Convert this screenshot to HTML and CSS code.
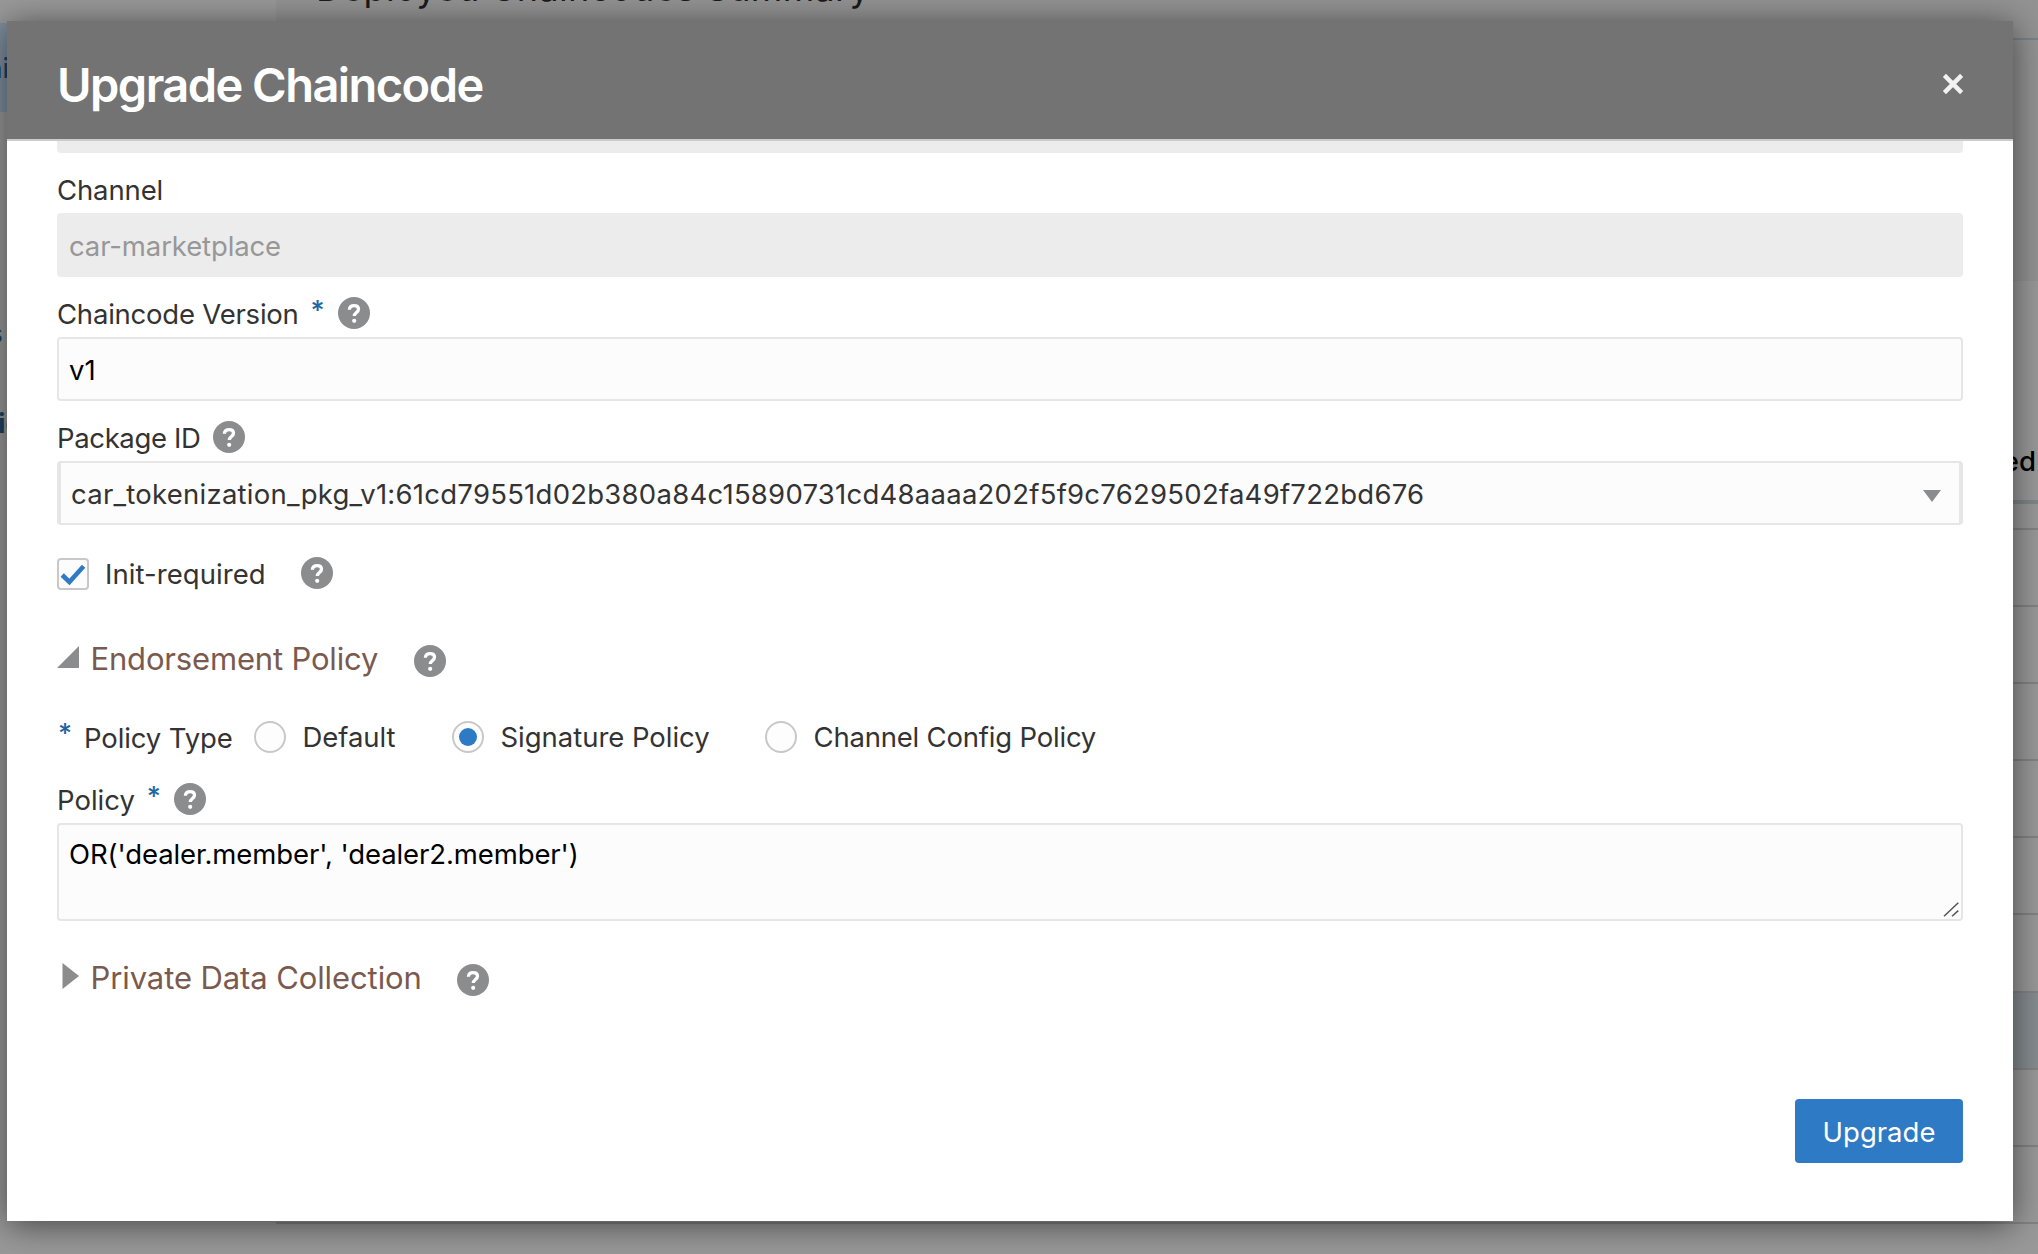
FILE: index.html
```
<!DOCTYPE html>
<html lang="en">
<head>
<meta charset="utf-8">
<title>Upgrade Chaincode</title>
<link rel="stylesheet" href="styles.css">
</head>
<body>
<svg class="defs" width="0" height="0" aria-hidden="true">
  <symbol id="help" viewBox="0 0 32 32">
    <circle cx="16" cy="16" r="16" fill="#8b8c8e"/>
    <path d="M11.4 12.8C11.4 9.9 13.3 8.6 16.1 8.6c2.6 0 4.4 1.4 4.4 3.7 0 3.2-4.2 3.2-4.2 6.7" fill="none" stroke="#fff" stroke-width="3.3"/>
    <circle cx="16.2" cy="23.8" r="2.1" fill="#fff"/>
  </symbol>
</svg>

<div class="page">
  <nav class="sidebar">
    <div class="nav-item nav-active"><span class="nav-a">ni</span></div>
    <div class="nav-item nav-second"><span class="nav-b">s</span></div>
    <div class="nav-item nav-third"><span class="nav-c">ic</span></div>
  </nav>
  <main class="summary">
    <h1 class="summary-title">Deployed Chaincodes Summary</h1>
    <div class="summary-panel"></div>
    <div class="table-head">ed</div>
    <div class="table-gap"></div>
    <div class="row"></div>
    <div class="row"></div>
    <div class="row"></div>
    <div class="row"></div>
    <div class="row"></div>
    <div class="row"></div>
    <div class="row row-selected"></div>
    <div class="row"></div>
    <div class="row"></div>
    <div class="row"></div>
  </main>
</div>

<section class="dialog">
  <header class="dialog-header">
    <h2 class="dialog-title">Upgrade Chaincode</h2>
    <svg class="close" width="22" height="22" viewBox="0 0 22 22"><path d="M2.4 2.4l17.2 17.2M19.6 2.4L2.4 19.6" stroke="#f2f2f2" stroke-width="4.4"/></svg>
  </header>
  <div class="dialog-body">
    <div class="field-cut"></div>

    <div class="label"><span class="t-channel">Channel</span></div>
    <div class="field disabled">car-marketplace</div>

    <div class="label"><span class="t-version">Chaincode Version</span><span class="star star-version">*</span><svg class="help"><use href="#help"/></svg></div>
    <div class="field entry">v1</div>

    <div class="label"><span class="t-package">Package ID</span><svg class="help help-package"><use href="#help"/></svg></div>
    <div class="field select"><span class="t-id">car_tokenization_pkg_v1:61cd79551d02b380a84c15890731cd48aaaa202f5f9c7629502fa49f722bd676</span><svg width="18" height="12" viewBox="0 0 18 12"><path d="M0 0h18l-9 12z" fill="#8b8c8e"/></svg></div>

    <div class="check-row">
      <span class="checkbox"><svg width="28" height="28" viewBox="0 0 28 28"><path d="M3.2 15L10.4 22L24.6 6.2" fill="none" stroke="#2f7ac4" stroke-width="4.6"/></svg></span>
      <span class="t-init">Init-required</span>
      <svg class="help help-init"><use href="#help"/></svg>
    </div>

    <div class="section section-endorsement">
      <svg class="tri" width="22" height="22" viewBox="0 0 22 22"><path d="M22 0v22H0z" fill="#8b8c8e"/></svg>
      <span class="t-endorsement">Endorsement Policy</span>
      <svg class="help help-endorsement"><use href="#help"/></svg>
    </div>

    <div class="radio-row">
      <span class="star star-type">*</span>
      <span class="t-type">Policy Type</span>
      <span class="radio"></span><span class="option option-default">Default</span>
      <span class="radio on"></span><span class="option option-signature">Signature Policy</span>
      <span class="radio"></span><span class="option option-channel">Channel Config Policy</span>
    </div>

    <div class="label label-policy"><span class="t-policy">Policy</span><span class="star star-policy">*</span><svg class="help"><use href="#help"/></svg></div>
    <div class="textarea"><span>OR('dealer.member', 'dealer2.member')</span><svg class="grip" width="16" height="15" viewBox="0 0 16 15"><path d="M1 14.2L15.3 .8M9 14.2L15.3 8.6" stroke="#555" stroke-width="1.5"/></svg></div>

    <div class="section section-private">
      <svg class="tri" width="22" height="26" viewBox="0 0 22 26"><path d="M5.5 0L22 13L5.5 26z" fill="#8b8c8e"/></svg>
      <span class="t-private">Private Data Collection</span>
      <svg class="help help-private"><use href="#help"/></svg>
    </div>
  </div>
  <footer class="dialog-footer"><button class="primary">Upgrade</button></footer>
</section>
</body>
</html>
```
FILE: styles.css
```
* { box-sizing: border-box; }
body {
  margin: 0;
  width: 2038px;
  height: 1254px;
  overflow: hidden;
  background: #999;
  font: 27.5px/32px Inter, "Liberation Sans", sans-serif;
  color: #333;
}
svg { display: block; flex: none; }
span { flex: none; white-space: nowrap; }
.defs { position: absolute; }

/* dimmed page behind the dialog */
.page { display: flex; height: 1254px; overflow: hidden; }
.sidebar { width: 276px; padding-top: 23px; overflow: hidden; color: #1b4265; font-weight: 500; }
.nav-item { display: flex; align-items: center; height: 89px; }
.nav-active { background: #7f8f9f; }
.nav-second { margin-top: 176px; }
.nav-third { margin-top: 1px; font-weight: 700; }
.nav-a { margin-left: -14px; }
.nav-b { margin-left: -12px; }
.nav-c { margin-left: -2px; }
.summary { flex: 1; background: #999; }
.summary-title {
  margin: -12px 0 0;
  height: 50px;
  padding-left: 40px;
  background: #939393;
  color: #1a1a1a;
  font-size: 36px;
  font-weight: 400;
  line-height: 1px;
  letter-spacing: .32px;
}
.summary-panel { height: 243px; border-top: 2px solid #7b8388; background: #939393; }
.table-head {
  display: flex;
  align-items: center;
  justify-content: flex-end;
  height: 223px;
  padding: 140px 2px 0 0;
  border-bottom: 4px solid #818689;
  color: #000;
  font-weight: 500;
}
.table-gap { height: 24px; }
.row { height: 77.1px; border-top: 2px solid #838383; }
.row-selected { background: #868c90; }

.dialog {
  position: absolute;
  left: 7px;
  top: 21px;
  width: 2006px;
  height: 1200px;
  display: flex;
  flex-direction: column;
  background: #fff;
  box-shadow: 0 4px 32px rgba(0, 0, 0, .55);
}
.dialog-header {
  display: flex;
  align-items: center;
  justify-content: space-between;
  height: 120px;
  padding: 10px 49px 0 50px;
  background: #737373;
  border-bottom: 2px solid #ccc;
}
.dialog-title {
  margin: 0;
  color: #fff;
  font-size: 47px;
  line-height: 56px;
  font-weight: 600;
  letter-spacing: -1.55px;
}
.close { margin-bottom: 2px; }
.dialog-body { flex: 1; padding: 0 50px; }
.field-cut { height: 12px; background: #ececec; border-radius: 0 0 4px 4px; }

.label { display: flex; align-items: center; height: 60px; padding-top: 14px; }
.label .help { margin-bottom: 2px; }
.help { width: 32px; height: 32px; }
.star { color: #1f66a6; font-size: 27px; font-weight: 500; line-height: 32px; width: 16px; text-align: center; }
.star-version { margin: 0 12px 6px 11px; }
.star-policy { margin: 0 12px 6px 11px; }
.t-channel { letter-spacing: -.13px; }
.t-version { letter-spacing: -.22px; }
.t-package { letter-spacing: -.36px; }
.help-package { margin-left: 12px; }

.field {
  display: flex;
  align-items: center;
  height: 64px;
  padding: 2px 10px 0;
  border: 2px solid #e5e6e6;
  border-radius: 4px;
  background: #fcfcfc;
}
.disabled { background: #ececec; border-color: #ececec; color: #979797; letter-spacing: -.12px; }
.entry { color: #000; }
.select { justify-content: space-between; border-width: 2px 4px; padding: 2px 18px 0 10px; }
.t-id { letter-spacing: .25px; }
.select svg { margin-top: 4px; }

.check-row { display: flex; align-items: center; height: 32px; margin-top: 33px; }
.checkbox { width: 32px; height: 32px; border: 2px solid #c8c8c8; border-radius: 4px; background: #fcfcfc; }
.t-init { margin-left: 16px; letter-spacing: .06px; width: 160px; }
.help-init { margin: 0 0 2px 36px; }

.section { display: flex; align-items: center; height: 40px; font-size: 31px; color: #7a5a4e; }
.section-endorsement { margin-top: 49px; }
.section-endorsement .tri { margin-bottom: 4px; }
.t-endorsement { margin-left: 11.5px; letter-spacing: -.17px; }
.help-endorsement { margin: 4px 0 0 35.5px; }

.radio-row { display: flex; align-items: center; height: 32px; margin-top: 42px; }
.star-type { margin: 0 11px 6px 0; }
.t-type { letter-spacing: -.12px; margin-top: 2px; width: 170px; }
.radio {
  flex: none;
  display: grid;
  place-items: center;
  width: 32px;
  height: 32px;
  border: 2px solid #c8c8c8;
  border-radius: 50%;
  background: #fdfdfd;
}
.on::after { content: ""; width: 18px; height: 18px; border-radius: 50%; background: #2f7ac4; }
.option { margin-left: 16.5px; }
.option-default { width: 149.5px; letter-spacing: -.07px; }
.option-signature { width: 264.5px; letter-spacing: -.03px; }
.option-channel { letter-spacing: -.2px; }

.label-policy { height: 70px; padding-top: 24px; }
.textarea {
  display: flex;
  justify-content: space-between;
  height: 98px;
  padding: 13px 2px 2px 10px;
  border: 2px solid #e5e6e6;
  border-radius: 4px;
  background: #fcfcfc;
  color: #000;
  letter-spacing: -.1px;
}
.grip { align-self: flex-end; }

.section-private { margin-top: 37px; }
.section-private .tri { margin-bottom: 4px; }
.t-private { margin-left: 11.5px; letter-spacing: -.1px; }
.help-private { margin: 4px 0 0 35px; }

.dialog-footer { display: flex; justify-content: flex-end; padding: 0 50px 58px; }
.primary {
  width: 168px;
  height: 64px;
  padding: 2px 0 0;
  border: 0;
  border-radius: 4px;
  background: #2f7ac4;
  color: #fff;
  font: inherit;
}
```
